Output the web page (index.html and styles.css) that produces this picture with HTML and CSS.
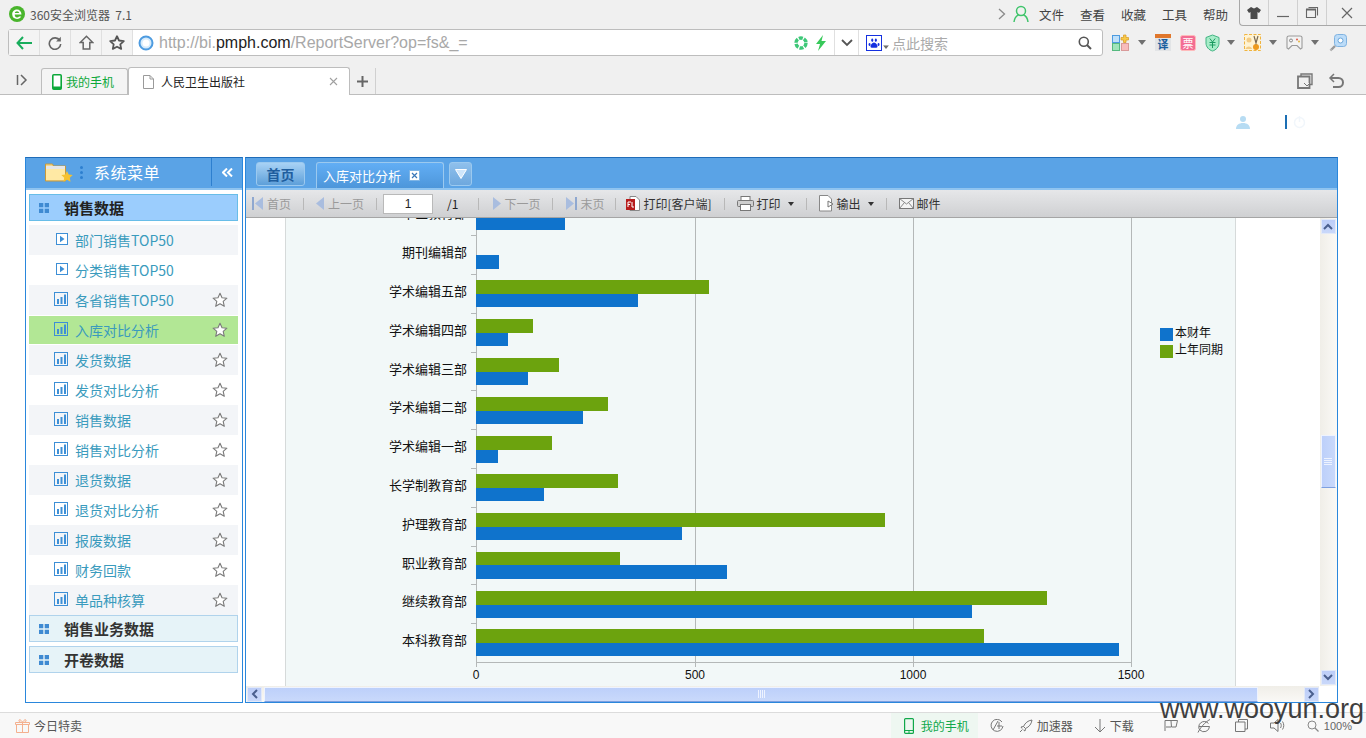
FILE: index.html
```html
<!DOCTYPE html>
<html lang="zh-CN">
<head>
<meta charset="utf-8">
<title>人民卫生出版社</title>
<link rel="stylesheet" href="styles.css">
</head>
<body>
<svg class="defs" width="0" height="0">
  <symbol id="i-star" viewBox="0 0 16 16"><path d="M8 1.2l2 4.5 4.9.5-3.7 3.2 1.1 4.9L8 11.8l-4.3 2.5 1.1-4.9L1.1 6.2 6 5.700z" fill="#fff" stroke="#7a7a7a" stroke-width="1.1" stroke-linejoin="round"/></symbol>
  <symbol id="i-play" viewBox="0 0 12 12"><rect x=".5" y=".5" width="11" height="11" fill="#fff" stroke="#3d8fd6"/><path d="M4 2.800l4.500 3.200L4 9.200z" fill="#3d8fd6"/></symbol>
  <symbol id="i-bars" viewBox="0 0 14 14"><rect x=".5" y=".5" width="13" height="13" fill="none" stroke="#3d8fd6"/><path d="M3 7h2v5H3zM6.500 5h2v7h-2zM10 2.500h2V12h-2z" fill="#3d8fd6"/></symbol>
  <symbol id="i-grid" viewBox="0 0 10 10"><path d="M0 0h4.300v4.300H0zM5.700 0H10v4.300H5.700zM0 5.700h4.300V10H0zM5.700 5.700H10V10H5.700z" fill="#3f8ad2"/></symbol>
  <symbol id="i-caret" viewBox="0 0 8 5"><path d="M0 0h8L4 5z" fill="#707070"/></symbol>
</svg>

<header class="titlebar">
  <svg class="logo" width="18" height="18" viewBox="0 0 18 18"><circle cx="9" cy="9" r="8" fill="#49b52c"/><path d="M4.500 9.500h9c0-3-2-5-4.500-5S4.200 6.500 4.200 9.300 6.200 14 9 14c2 0 3.400-.9 4.200-2.500H11c-.5.700-1.100 1-2 1-1.300 0-2.300-1.100-2.300-3zM6.800 8c.2-1.100 1-1.800 2.200-1.800S11 7 11.200 8z" fill="#fff" fill-rule="evenodd"/></svg>
  <span class="app-name">360安全浏览器&nbsp;&nbsp;7.1</span>
  <div class="title-right">
    <svg class="t-chev" width="8" height="12" viewBox="0 0 8 12"><path d="M1 1l5.500 5L1 11" fill="none" stroke="#8a8a8a" stroke-width="1.300"/></svg>
    <svg class="t-user" width="16" height="18" viewBox="0 0 16 18"><circle cx="8" cy="6" r="4.500" fill="none" stroke="#3fc46b" stroke-width="1.500"/><path d="M1 17c.5-4 3-6.500 4.500-7M15 17c-.5-4-3-6.500-4.500-7" fill="none" stroke="#3fc46b" stroke-width="1.500"/></svg>
    <nav class="t-menu"><span>文件</span><span>查看</span><span>收藏</span><span>工具</span><span>帮助</span></nav>
    <div class="winctl">
      <span class="wc"><svg width="14" height="12" viewBox="0 0 14 12"><path d="M4 0L0 3l2 3 1.500-1v7h7V5L12 6l2-3-4-3-3 1.500z" fill="#4a4a4a"/></svg></span>
      <span class="wc"><svg width="14" height="12" viewBox="0 0 14 12"><path d="M1 9.500h12" stroke="#666" stroke-width="1.200"/></svg></span>
      <span class="wc"><svg width="14" height="13" viewBox="0 0 14 13"><path d="M1.500 3.500h9v8h-9z M3.500 1.500h9v8" fill="none" stroke="#666" stroke-width="1.100"/><path d="M1 3.500h10" stroke="#666" stroke-width="2"/></svg></span>
      <span class="wc wc-last"><svg width="12" height="12" viewBox="0 0 12 12"><path d="M1 1l10 10M11 1L1 11" stroke="#666" stroke-width="1.200"/></svg></span>
    </div>
  </div>
</header>

<div class="navbar">
  <div class="addr">
    <span class="nav-btn"><svg width="16" height="14" viewBox="0 0 16 14"><path d="M7 1L1.500 7 7 13M2 7h14" fill="none" stroke="#18ad5c" stroke-width="2"/></svg></span>
    <span class="nav-btn"><svg width="14" height="14" viewBox="0 0 14 14"><path d="M11.800 4.500A5.700 5.700 0 1 0 12.700 8" fill="none" stroke="#666" stroke-width="1.600"/><path d="M12.800 .8v4.700H8.100z" fill="#666"/></svg></span>
    <span class="nav-btn"><svg width="15" height="15" viewBox="0 0 15 15"><path d="M7.500 1.200L1.200 7.500h3V14h6.600V7.500h3z" fill="none" stroke="#666" stroke-width="1.500"/></svg></span>
    <span class="nav-btn"><svg width="16" height="15" viewBox="0 0 16 15"><path d="M8 1.200l2 4.300 4.800.6-3.500 3.200.9 4.600L8 11.700l-4.200 2.200.9-4.600L1.200 6.100 6 5.500z" fill="none" stroke="#555" stroke-width="1.800" stroke-linejoin="round"/></svg></span>
    <svg class="globe" width="16" height="16" viewBox="0 0 16 16"><circle cx="8" cy="8" r="6.500" fill="#d6ebfb" stroke="#4d9be0" stroke-width="2"/><circle cx="8" cy="8" r="3.500" fill="#fff"/></svg>
    <span class="url">http://bi.<b>pmph.com</b>/ReportServer?op=fs&amp;_=</span>
    <svg class="turbo" width="14" height="14" viewBox="0 0 14 14"><circle cx="7" cy="7" r="5" fill="none" stroke="#3ec878" stroke-width="3.400" stroke-dasharray="4 1.200"/></svg>
    <svg class="bolt" width="12" height="16" viewBox="0 0 12 16"><path d="M8 0L1 9h4l-2 7 8-10H6.500z" fill="#38c95a"/></svg>
    <span class="addr-down"><svg width="12" height="8" viewBox="0 0 12 8"><path d="M1 1l5 5 5-5" fill="none" stroke="#555" stroke-width="1.800"/></svg></span>
    <span class="search">
      <svg class="paw" width="16" height="16" viewBox="0 0 16 16"><rect x=".5" y=".5" width="15" height="15" fill="#fff" stroke="#1430e0"/><path d="M3.500 8a1 1.500 0 1 0 .1 0zM6.200 3.500a1.100 1.700 0 1 0 .1 0zM9.800 3.500a1.100 1.700 0 1 0 .1 0zM12.500 8a1 1.500 0 1 0 .1 0zM8 7.500c-2 0-3.500 2.500-3.500 4 0 1.600 2 1.200 3.500 1.200s3.500.4 3.500-1.200c0-1.500-1.500-4-3.500-4z" fill="#1430e0"/></svg>
      <svg class="paw-caret" width="6" height="4" viewBox="0 0 8 5"><use href="#i-caret"/></svg>
      <span class="search-ph">点此搜索</span>
      <svg class="mag" width="14" height="14" viewBox="0 0 14 14"><circle cx="5.800" cy="5.800" r="4.500" fill="none" stroke="#555" stroke-width="1.600"/><path d="M9 9l4 4" stroke="#555" stroke-width="2"/></svg>
    </span>
  </div>
  <div class="ext">
    <svg width="17" height="17" viewBox="0 0 17 17"><rect x=".5" y="1.500" width="7" height="7" fill="#bfe0fa" stroke="#4d9be0"/><rect x=".5" y="9.500" width="7" height="7" fill="#9fe4ba" stroke="#55b97f"/><rect x="9.500" y="9.500" width="7" height="7" fill="#f8bcbc" stroke="#d99a9a"/><path d="M11.500 1h2.500v2.500h2.500V6H14v2.500h-2.500V6H9V3.500h2.500z" fill="#f7c94a" stroke="#d89a20" stroke-width=".7"/></svg>
    <svg class="ext-caret" width="8" height="5" viewBox="0 0 8 5"><use href="#i-caret"/></svg>
    <svg class="ext-gap" width="16" height="17" viewBox="0 0 16 17"><rect width="16" height="17" fill="#e2e4e6"/><rect width="16" height="4" fill="#e0772c"/><text x="8" y="15" class="ext-txt">译</text></svg>
    <svg class="ext-gap2" width="16" height="16" viewBox="0 0 16 16"><rect x=".5" y=".5" width="15" height="15" rx="2" fill="#f36d93" stroke="#fbb"/><text x="8" y="13" class="ext-txt2">票</text></svg>
    <svg class="ext-gap2" width="15" height="18" viewBox="0 0 15 18"><path d="M7.500 1L14 3.500V9c0 4-3 7-6.500 8C4 16 1 13 1 9V3.500z" fill="#a6ecc8" stroke="#41b482"/><path d="M4.800 4.500l2.700 3.500 2.700-3.500M4.500 8.500h6M4.500 11h6M7.500 8v6" fill="none" stroke="#1a9a60"/></svg>
    <svg class="ext-caret2" width="8" height="5" viewBox="0 0 8 5"><use href="#i-caret"/></svg>
    <svg class="ext-gap3" width="17" height="17" viewBox="0 0 17 17"><rect x=".5" y=".5" width="16" height="16" fill="#fff3d2" stroke="#f0b440" stroke-dasharray="3 1.500"/><circle cx="5" cy="6" r="2.500" fill="#f3cc86"/><path d="M1.500 15c.5-3.500 6-3.500 6.500 0z" fill="#f3cc86"/><circle cx="12" cy="13" r="3" fill="#ee9a1e"/><path d="M10 2l2 7 2-7" fill="none" stroke="#7a6a55" stroke-width="1.200"/></svg>
    <svg class="ext-caret3" width="8" height="5" viewBox="0 0 8 5"><use href="#i-caret"/></svg>
    <svg class="ext-gap3" width="17" height="15" viewBox="0 0 17 15"><path d="M1 2.500C1 1.500 2 1 3 1h11c1 0 2 .5 2 1.500V13l-1.500 1L11 10.500H6L2.500 14 1 13z" fill="#f3f3f3" stroke="#9b9b9b" stroke-width="1.100"/><circle cx="5" cy="5.500" r="1.500" fill="none" stroke="#888"/><circle cx="11" cy="4.500" r="1" fill="#e15b4a"/><circle cx="13" cy="6.500" r="1" fill="#e6b740"/></svg>
    <svg class="ext-caret3" width="8" height="5" viewBox="0 0 8 5"><use href="#i-caret"/></svg>
    <svg class="ext-gap4" width="18" height="18" viewBox="0 0 18 18"><rect x="5.500" y=".5" width="12" height="12" rx="3" fill="#bcdcf8" stroke="#7fb2e0"/><circle cx="11.500" cy="6.500" r="2.500" fill="#fff" stroke="#6ba6da"/><path d="M6 12l-4.500 4.500" stroke="#999" stroke-width="2.400"/><path d="M2 15.500l1 1" stroke="#fff"/></svg>
  </div>
</div>

<div class="tabbar">
  <svg class="side-toggle" width="12" height="12" viewBox="0 0 12 12"><path d="M1.500 1v10" stroke="#666" stroke-width="1.500"/><path d="M5 1l5 5-5 5" fill="none" stroke="#666" stroke-width="1.500"/></svg>
  <div class="btab">
    <svg width="10" height="16" viewBox="0 0 10 16"><rect x=".8" y=".8" width="8.400" height="14.400" rx="1" fill="#fff" stroke="#0da83a" stroke-width="1.600"/><path d="M1 12.500h8V15H1z" fill="#0da83a"/></svg>
    <span>我的手机</span>
  </div>
  <div class="btab btab-on">
    <svg class="doc" width="11" height="14" viewBox="0 0 11 14"><path d="M.5.500h6.500l3.500 3.500v9.500H.5z M7 .5V4h3.500" fill="#fff" stroke="#9a9a9a"/></svg>
    <span>人民卫生出版社</span>
    <svg class="btab-x" width="9" height="9" viewBox="0 0 9 9"><path d="M1 1l7 7M8 1L1 8" stroke="#a0a0a0" stroke-width="1.100"/></svg>
  </div>
  <span class="newtab"><svg width="11" height="11" viewBox="0 0 11 11"><path d="M5.500 0v11M0 5.500h11" stroke="#666" stroke-width="2"/></svg></span>
  <div class="tab-tools">
    <svg width="17" height="16" viewBox="0 0 17 16"><path d="M4 3.500V1h11v10.500h-2" fill="none" stroke="#777" stroke-width="1.400"/><path d="M1 3.500h11.500V15H1z" fill="none" stroke="#777" stroke-width="1.800"/><path d="M7 10l3 3 3-3" fill="#f0f0f0" stroke="#777"/></svg>
    <svg width="16" height="16" viewBox="0 0 16 16"><path d="M3 5h7.500a4.500 4.500 0 0 1 0 9H5" fill="none" stroke="#777" stroke-width="2"/><path d="M6 1L2 5l4 4" fill="none" stroke="#777" stroke-width="1.500"/></svg>
  </div>
</div>

<main class="page">
  <div class="userbar">
    <svg class="ub-user" width="14" height="14" viewBox="0 0 14 14"><circle cx="7" cy="4" r="3" fill="#b7dcf3"/><path d="M0 14c0-4 3-6 7-6s7 2 7 6z" fill="#b7dcf3"/></svg>
    <span class="ub-sep"></span>
    <svg width="13" height="14" viewBox="0 0 13 14"><circle cx="6.500" cy="7.500" r="5" fill="none" stroke="#f1f6fb" stroke-width="1.500"/><path d="M6.500 1v6" stroke="#f1f6fb" stroke-width="1.500"/></svg>
  </div>

  <div class="panels">
    <aside class="leftp">
      <div class="lp-head">
        <svg class="folder" width="28" height="19" viewBox="0 0 28 19"><path d="M.5 1h7l1 2h12v15H.5z" fill="#f5d78a" stroke="#c79a3c"/><path d="M1 3h19v3H1z" fill="#e6e6e6"/><path d="M1 6h19v11H1z" fill="#ffe9a4"/><path d="M22 8l1.700 3.600 4 .5-2.900 2.700.7 3.900-3.500-1.900-3.500 1.900.7-3.900-2.900-2.700 4-.5z" fill="#f6c22f"/></svg>
        <span class="dots"><i></i><i></i><i></i></span>
        <span class="lp-title">系统菜单</span>
        <span class="lp-collapse"><svg width="11" height="9" viewBox="0 0 11 9"><path d="M5 .5L1 4.500l4 4M10 .5l-4 4 4 4" fill="none" stroke="#fff" stroke-width="2"/></svg></span>
      </div>
      <div class="lp-body">
        <div class="grp grp-on"><svg width="10" height="10"><use href="#i-grid"/></svg><span>销售数据</span></div>
        <ul class="items">
          <li class="item alt"><svg class="ic-play" width="12" height="12"><use href="#i-play"/></svg><span>部门销售TOP50</span></li>
          <li class="item"><svg class="ic-play" width="12" height="12"><use href="#i-play"/></svg><span>分类销售TOP50</span></li>
          <li class="item alt"><svg class="ic-bars" width="14" height="14"><use href="#i-bars"/></svg><span>各省销售TOP50</span><svg class="star" width="16" height="16"><use href="#i-star"/></svg></li>
          <li class="item on"><svg class="ic-bars" width="14" height="14"><use href="#i-bars"/></svg><span>入库对比分析</span><svg class="star" width="16" height="16"><use href="#i-star"/></svg></li>
          <li class="item alt"><svg class="ic-bars" width="14" height="14"><use href="#i-bars"/></svg><span>发货数据</span><svg class="star" width="16" height="16"><use href="#i-star"/></svg></li>
          <li class="item"><svg class="ic-bars" width="14" height="14"><use href="#i-bars"/></svg><span>发货对比分析</span><svg class="star" width="16" height="16"><use href="#i-star"/></svg></li>
          <li class="item alt"><svg class="ic-bars" width="14" height="14"><use href="#i-bars"/></svg><span>销售数据</span><svg class="star" width="16" height="16"><use href="#i-star"/></svg></li>
          <li class="item"><svg class="ic-bars" width="14" height="14"><use href="#i-bars"/></svg><span>销售对比分析</span><svg class="star" width="16" height="16"><use href="#i-star"/></svg></li>
          <li class="item alt"><svg class="ic-bars" width="14" height="14"><use href="#i-bars"/></svg><span>退货数据</span><svg class="star" width="16" height="16"><use href="#i-star"/></svg></li>
          <li class="item"><svg class="ic-bars" width="14" height="14"><use href="#i-bars"/></svg><span>退货对比分析</span><svg class="star" width="16" height="16"><use href="#i-star"/></svg></li>
          <li class="item alt"><svg class="ic-bars" width="14" height="14"><use href="#i-bars"/></svg><span>报废数据</span><svg class="star" width="16" height="16"><use href="#i-star"/></svg></li>
          <li class="item"><svg class="ic-bars" width="14" height="14"><use href="#i-bars"/></svg><span>财务回款</span><svg class="star" width="16" height="16"><use href="#i-star"/></svg></li>
          <li class="item alt"><svg class="ic-bars" width="14" height="14"><use href="#i-bars"/></svg><span>单品种核算</span><svg class="star" width="16" height="16"><use href="#i-star"/></svg></li>
        </ul>
        <div class="grp"><svg width="10" height="10"><use href="#i-grid"/></svg><span>销售业务数据</span></div>
        <div class="grp"><svg width="10" height="10"><use href="#i-grid"/></svg><span>开卷数据</span></div>
      </div>
    </aside>

    <section class="rightp">
      <div class="rp-head">
        <span class="rtab">首页</span>
        <span class="rtab rtab-on">入库对比分析<svg width="11" height="11" viewBox="0 0 11 11"><rect x=".5" y=".5" width="10" height="10" fill="#fff" stroke="#7fb5e6"/><path d="M3 3l5 5M8 3L3 8" stroke="#3b78b8" stroke-width="1.200"/></svg></span>
        <span class="rtab-more"><svg width="12" height="10" viewBox="0 0 12 10"><path d="M.5.500h11L6 9.500z" fill="#cfe6fb" stroke="#fff"/></svg></span>
      </div>
      <div class="rp-tools">
        <span class="tb off"><svg width="12" height="13" viewBox="0 0 12 13"><path d="M0 0h2v13H0z" fill="#8fa8d0"/><path d="M11 0v13L3 6.500z" fill="#a9bddf"/></svg>首页</span>
        <i class="sep"></i>
        <span class="tb off"><svg width="9" height="13" viewBox="0 0 9 13"><path d="M8 0v13L0 6.500z" fill="#a9bddf"/></svg>上一页</span>
        <i class="sep"></i>
        <input class="pageno" type="text" value="1" aria-label="页码">
        <span class="total">/1</span>
        <i class="sep sep-w"></i>
        <span class="tb off"><svg width="9" height="13" viewBox="0 0 9 13"><path d="M1 0v13l8-6.500z" fill="#a9bddf"/></svg>下一页</span>
        <i class="sep"></i>
        <span class="tb off"><svg width="12" height="13" viewBox="0 0 12 13"><path d="M1 0v13l8-6.500z" fill="#a9bddf"/><path d="M10 0h2v13h-2z" fill="#8fa8d0"/></svg>末页</span>
        <i class="sep sep-n"></i>
        <span class="tb"><svg width="14" height="15" viewBox="0 0 14 15"><path d="M4 .5h6l3.500 3.500v10.500H4z" fill="#fff" stroke="#888"/><rect y="3" width="9" height="11" fill="#b71c1c"/><path d="M2 11V6h3M2 8.500h2M6 6v5h2" fill="none" stroke="#fff"/></svg>打印[客户端]</span>
        <i class="sep"></i>
        <span class="tb"><svg width="17" height="15" viewBox="0 0 17 15"><rect x="4" y=".5" width="9" height="4" fill="#fff" stroke="#777"/><rect x=".5" y="4.500" width="16" height="6" rx="1" fill="#cfcfcf" stroke="#777"/><rect x="3.500" y="8.500" width="10" height="6" fill="#fff" stroke="#777"/></svg>打印<svg class="tb-caret" width="6" height="4" viewBox="0 0 6 4"><path d="M0 0h6L3 4z" fill="#333"/></svg></span>
        <i class="sep"></i>
        <span class="tb"><svg width="15" height="17" viewBox="0 0 15 17"><path d="M.5.500H9l3.500 3.500v12H.5z" fill="#fff" stroke="#888"/><path d="M9 6l5 3-5 3z" fill="#fff" stroke="#777"/></svg>输出<svg class="tb-caret" width="6" height="4" viewBox="0 0 6 4"><path d="M0 0h6L3 4z" fill="#333"/></svg></span>
        <i class="sep"></i>
        <span class="tb"><svg width="15" height="11" viewBox="0 0 15 11"><rect x=".5" y=".5" width="14" height="10" fill="#f4f4f4" stroke="#777"/><path d="M.5.500l7 5.500 7-5.500M.5 10.500l5-6M14.500 10.500l-5-6" fill="none" stroke="#888"/></svg>邮件</span>
      </div>
      <div class="rp-content">
        <svg class="chart" width="1074" height="468" viewBox="246 218 1074 468">
          <rect x="285" y="218" width="951" height="468" class="plot"/>
          <path d="M285.500 218v468M1235.500 218v468" class="frame"/>
          <path d="M695.500 218v449M913.500 218v449M1131.500 218v449" class="gridl"/>
          <path d="M476.500 218v449M471 235.500h5M471 274.500h5M471 313.500h5M471 352.500h5M471 390.500h5M471 429.500h5M471 468.500h5M471 507.500h5M471 546.500h5M471 584.500h5M471 623.500h5M476 662.500h656" class="gridl"/>
          <g class="s-green">
            <rect x="476" y="280" width="233" height="14"/><rect x="476" y="319" width="57" height="14"/>
            <rect x="476" y="358" width="83" height="14"/><rect x="476" y="397" width="132" height="14"/>
            <rect x="476" y="436" width="76" height="14"/><rect x="476" y="474" width="142" height="14"/>
            <rect x="476" y="513" width="409" height="14"/><rect x="476" y="552" width="144" height="14"/>
            <rect x="476" y="591" width="571" height="14"/><rect x="476" y="629" width="508" height="14"/>
          </g>
          <g class="s-blue">
            <rect x="476" y="218" width="89" height="12"/><rect x="476" y="255" width="23" height="14"/>
            <rect x="476" y="294" width="162" height="13"/><rect x="476" y="333" width="32" height="13"/>
            <rect x="476" y="372" width="52" height="13"/><rect x="476" y="411" width="107" height="13"/>
            <rect x="476" y="450" width="22" height="13"/><rect x="476" y="488" width="68" height="13"/>
            <rect x="476" y="527" width="206" height="13"/><rect x="476" y="565" width="251" height="14"/>
            <rect x="476" y="605" width="496" height="13"/><rect x="476" y="643" width="643" height="13"/>
          </g>
          <g class="cat">
            <text x="467" y="218">中医教育部</text><text x="467" y="257">期刊编辑部</text>
            <text x="467" y="296">学术编辑五部</text><text x="467" y="335">学术编辑四部</text>
            <text x="467" y="374">学术编辑三部</text><text x="467" y="412">学术编辑二部</text>
            <text x="467" y="451">学术编辑一部</text><text x="467" y="490">长学制教育部</text>
            <text x="467" y="529">护理教育部</text><text x="467" y="568">职业教育部</text>
            <text x="467" y="606">继续教育部</text><text x="467" y="645">本科教育部</text>
          </g>
          <g class="val">
            <text x="476" y="679">0</text><text x="695" y="679">500</text>
            <text x="913" y="679">1000</text><text x="1131" y="679">1500</text>
          </g>
          <rect x="1160" y="328" width="13" height="13" class="s-blue"/>
          <rect x="1160" y="345" width="13" height="13" class="s-green"/>
          <text x="1175" y="337" class="leg">本财年</text>
          <text x="1175" y="354" class="leg">上年同期</text>
        </svg>
        <div class="vscroll">
          <span class="sb-btn"><svg width="10" height="7" viewBox="0 0 10 7"><path d="M1 6l4-4 4 4" fill="none" stroke="#4a5f8e" stroke-width="2"/></svg></span>
          <span class="sb-thumb-v"><svg width="8" height="7" viewBox="0 0 8 7"><path d="M0 .5h8M0 2.500h8M0 4.500h8M0 6.500h8" stroke="#eef3ff"/></svg></span>
          <span class="sb-btn sb-end"><svg width="10" height="7" viewBox="0 0 10 7"><path d="M1 1l4 4 4-4" fill="none" stroke="#4a5f8e" stroke-width="2"/></svg></span>
        </div>
      </div>
      <div class="hscroll">
        <span class="sb-btn"><svg width="7" height="10" viewBox="0 0 7 10"><path d="M6 1L2 5l4 4" fill="none" stroke="#4a5f8e" stroke-width="2"/></svg></span>
        <span class="sb-thumb-h"><svg width="7" height="8" viewBox="0 0 7 8"><path d="M.5 0v8M2.500 0v8M4.500 0v8M6.500 0v8" stroke="#eef3ff"/></svg></span>
        <span class="sb-btn sb-end"><svg width="7" height="10" viewBox="0 0 7 10"><path d="M1 1l4 4-4 4" fill="none" stroke="#4a5f8e" stroke-width="2"/></svg></span>
      </div>
    </section>
  </div>
</main>

<footer class="statusbar">
  <svg class="gift" width="15" height="14" viewBox="0 0 15 14"><path d="M1.500 5.500h12v8h-12zM.5 3.500h14v2H.5zM7.500 3.500v10M7.500 3.500C5 3.500 3.500 2.500 4 1c.7-1 2.800.5 3.500 2.500C8.200 1.500 10.300 0 11 1c.5 1.500-1 2.500-3.500 2.500" fill="none" stroke="#f4b08f"/></svg>
  <span class="deal">今日特卖</span>
  <div class="st-right">
    <span class="st-phone"><svg width="10" height="16" viewBox="0 0 10 16"><rect x=".6" y=".6" width="8.800" height="14.800" rx="1" fill="none" stroke="#10a84a" stroke-width="1.200"/><path d="M1 12.500h8M4 14h2" stroke="#10a84a"/></svg><span>我的手机</span></span>
    <svg class="st-i1" width="14" height="14" viewBox="0 0 14 14"><path d="M12 3A6 6 0 1 0 13 7" fill="none" stroke="#777"/><path d="M3 11l5-9M7 7h5M9 3v7" fill="none" stroke="#777"/></svg>
    <span class="st-txt st-acc"><svg width="14" height="14" viewBox="0 0 14 14"><path d="M13 1C9 1.500 6 4 4.500 7.500l2 2C10 8 12.500 5 13 1zM4.500 7.500L2 8l1 1.500M6.500 9.500L6 12l-1.500-1M3.500 10.500L1 13" fill="none" stroke="#777"/></svg>加速器</span>
    <span class="st-txt st-dl"><svg width="12" height="14" viewBox="0 0 12 14"><path d="M6 0v13M1 8l5 5 5-5" fill="none" stroke="#777"/></svg>下载</span>
    <svg class="st-i2" width="14" height="11" viewBox="0 0 14 11"><path d="M1 11V.5h12.500L12 7H7.500L7 1M7 7H2" fill="none" stroke="#777"/></svg>
    <svg class="st-i3" width="14" height="14" viewBox="0 0 14 14"><path d="M3 11.500A5.500 5.500 0 0 1 11.500 4.500M2 7.500h10.500A5.500 5.500 0 0 1 3 11M1 13.500C3 9 8 3 13 .5" fill="none" stroke="#777"/></svg>
    <svg class="st-i4" width="13" height="13" viewBox="0 0 13 13"><path d="M3.500 3V.5h9V10H10M.5 3h9.500v9.500H.5z" fill="none" stroke="#777"/></svg>
    <svg class="st-i5" width="15" height="13" viewBox="0 0 15 13"><path d="M.5 4v5H4l4 3.500V.5L4 4zM10.500 4c1 1.500 1 3.500 0 5M12.500 2.500c1.700 2.500 1.700 5.500 0 8" fill="none" stroke="#777"/></svg>
    <svg class="st-i6" width="12" height="12" viewBox="0 0 12 12"><circle cx="5" cy="5" r="4" fill="none" stroke="#888"/><path d="M8 8l3.500 3.500" stroke="#888" stroke-width="1.300"/></svg>
    <span class="st-zoom">100%</span>
  </div>
  <span class="watermark">www.wooyun.org</span>
</footer>
</body>
</html>
```

FILE: styles.css
```css
* { box-sizing: border-box; }
html, body { margin: 0; padding: 0; }
body {
  width: 1366px;
  height: 738px;
  overflow: hidden;
  display: flex;
  flex-direction: column;
  font-family: "Noto Sans CJK SC", "Liberation Sans", sans-serif;
  font-size: 12px;
  color: #333;
  background: #f0f0f0;
}
svg { display: block; flex: none; }
.defs { position: absolute; }

/* title bar */
.titlebar { height: 28px; display: flex; align-items: center; padding-left: 8px; }
.logo { margin-right: 4px; }
.app-name { font-size: 12px; color: #555; }
.title-right { margin-left: auto; display: flex; align-items: center; height: 28px; }
.t-chev { margin-right: 7px; }
.t-user { margin-right: 10px; }
.t-menu { display: flex; gap: 16px; margin-right: 11px; font-size: 12.500px; color: #444; }
.winctl {
  width: 127px; height: 26px; margin-bottom: 2px;
  display: flex;
  border: 1px solid #a8a8a8; border-top: 0; border-right: 0;
  border-bottom-left-radius: 4px;
}
.wc { width: 29px; display: flex; align-items: center; justify-content: center; border-right: 1px solid #d0d0d0; }
.wc-last { flex: 1; border-right: 0; }

/* navigation bar */
.navbar { height: 38px; display: flex; padding: 1px 0 0 8px; }
.addr {
  width: 1095px; height: 27px;
  display: flex; align-items: center;
  background: #fff; border: 1px solid #bdbdbd; border-radius: 3px;
}
.nav-btn {
  width: 31px; height: 25px;
  display: flex; align-items: center; justify-content: center;
  background: #f4f4f4; border-right: 1px solid #e0e0e0;
}
.globe { margin: 0 5px 0 5px; }
.url { font-family: "Liberation Sans", sans-serif; font-size: 16px; color: #a8a8a8; }
.url b { font-weight: 400; color: #222; }
.turbo { margin-left: auto; margin-right: 7px; }
.bolt { margin-right: 7px; }
.addr-down {
  width: 25px; height: 25px;
  display: flex; align-items: center; justify-content: center;
  border-left: 1px solid #e0e0e0; border-right: 1px solid #e0e0e0;
}
.search { width: 243px; display: flex; align-items: center; padding-left: 7px; }
.paw-caret { margin: 8px 3px 0 1px; }
.search-ph { font-size: 14px; color: #aaa; }
.mag { margin-left: auto; margin-right: 10px; }
.ext { flex: 1; display: flex; align-items: center; height: 27px; padding-left: 9px; }
.ext-caret { margin-left: 9px; }
.ext-gap { margin-left: 9px; }
.ext-gap2 { margin-left: 9px; }
.ext-caret2 { margin-left: 7px; }
.ext-gap3 { margin-left: 9px; }
.ext-caret3 { margin-left: 8px; }
.ext-gap4 { margin-left: 10px; }
.ext-txt { font-size: 11px; fill: #1a5f9e; text-anchor: middle; font-weight: 700; }
.ext-txt2 { font-size: 11px; fill: #fff; text-anchor: middle; }

/* tab bar */
.tabbar {
  height: 29px; display: flex; align-items: flex-end; padding-left: 16px;
  border-bottom: 1px solid #bdbdbd;
}
.side-toggle { margin: 0 13px 8px 0; }
.btab {
  width: 87px; height: 26px;
  display: flex; align-items: center; gap: 4px; padding-left: 10px;
  font-size: 12px; color: #0da83a;
  background: #f4f4f4;
  border: 1px solid #bdbdbd; border-bottom: 0; border-radius: 3px 3px 0 0;
}
.btab-on {
  width: 222px; height: 28px; margin-bottom: -1px; padding-left: 14px; gap: 7px;
  color: #222; background: #fff;
}
.btab-x { margin-left: auto; margin-right: 11px; }
.newtab {
  width: 26px; height: 26px;
  display: flex; align-items: center; justify-content: center;
  border-right: 1px solid #d0d0d0;
}
.tab-tools { margin-left: auto; display: flex; gap: 14px; padding: 0 22px 5px 0; }

/* page */
.page { height: 617px; background: #fff; padding-left: 25px; }
.userbar { height: 62px; display: flex; align-items: flex-start; justify-content: flex-end; padding: 20px 60px 0 0; }
.ub-user { margin-right: 35px; }
.ub-sep { width: 2px; height: 14px; margin-right: 6px; background: #1c6fb4; }
.panels { height: 546px; display: flex; gap: 2px; }

/* left panel */
.leftp { width: 218px; border: 1px solid #2a87dc; border-top-color: #1f6cb8; }
.lp-head {
  height: 32px; display: flex; align-items: center; padding: 0 0 2px 19px;
  background: #5aa3e6;
  border-bottom: 2px solid #8fc4f0;
}
.folder { margin-right: 7px; }
.dots { display: flex; flex-direction: column; gap: 2px; margin-right: 11px; }
.dots i { width: 3px; height: 3px; border-radius: 50%; background: #2d7fcf; }
.lp-title { font-size: 16px; color: #fff; letter-spacing: .5px; }
.lp-collapse {
  margin-left: auto; width: 31px; height: 28px;
  display: flex; align-items: center; justify-content: center;
  border-left: 1px solid #2d7fcf;
}
.lp-body { padding: 4px 4px 0 3px; }
.grp {
  height: 27px; display: flex; align-items: center; gap: 15px; padding-left: 9px;
  font-size: 15px; font-weight: 700; color: #333;
  background: #e6f3f8; border: 1px solid #b0d3ec;
}
.grp + .grp { margin-top: 4px; }
.grp-on { background: #9bcdfd; border-color: #68bde8; color: #222; margin-bottom: 4px; }
.items { list-style: none; margin: 0; padding: 0; }
.item {
  height: 30px; display: flex; align-items: center; position: relative;
  font-size: 14px; color: #3a9bbd;
}
.item.alt { background: #f3f5f8; }
.item.on { height: 28px; margin: 1px 0; background: #b2e795; }
.ic-play { margin: 0 7px 2px 27px; }
.ic-bars { margin: 0 7px 2px 25px; }
.star { margin-left: auto; margin-right: 10px; }

/* right panel */
.rightp { width: 1093px; display: flex; flex-direction: column; border: 1px solid #2a87dc; border-top-color: #1f6cb8; }
.rp-head {
  height: 32px; display: flex; align-items: flex-start; padding: 4px 0 0 10px;
  background: #5aa3e6;
  border-bottom: 2px solid #8fc4f0;
}
.rtab {
  width: 49px; height: 24px;
  display: flex; align-items: center; justify-content: center;
  font-size: 14px; font-weight: 700; color: #1f5e9e;
  background: linear-gradient(#a8d2f5, #5d9fd9);
  border: 1px solid #9bc9ef; border-radius: 3px;
}
.rtab-on {
  width: 128px; height: 26px; margin-left: 11px; padding-left: 6px; gap: 8px; justify-content: flex-start;
  font-size: 13px; font-weight: 400; color: #fff;
  background: linear-gradient(#62aef5, #4d96da);
  border-bottom: 0; border-radius: 3px 3px 0 0;
}
.rtab-more {
  width: 23px; height: 24px; margin-left: 5px;
  display: flex; align-items: center; justify-content: center;
  background: linear-gradient(#8fc0ec, #6ea8de);
  border: 1px solid #9bc9ef; border-radius: 3px;
}
.rp-tools {
  height: 28px; display: flex; align-items: center; padding-left: 6px;
  font-size: 12px; color: #333;
  background: linear-gradient(#e6e7e9, #cfd0d2);
  border-bottom: 1px solid #a5a5a5;
}
.tb { display: flex; align-items: center; gap: 3px; }
.tb.off { color: #9a9a9a; }
.tb-caret { margin-left: 4px; }
.sep { width: 1px; height: 12px; margin: 0 12px; background: #b8b8b8; }
.sep-w { margin-left: 20px; margin-right: 13px; }
.sep-n { margin-left: 11px; margin-right: 10px; }
.pageno {
  width: 50px; height: 20px; margin-left: -6px; padding: 0;
  text-align: center; font-family: "Liberation Sans", sans-serif; font-size: 12px;
  border: 1px solid #b9b9b9; background: #fff; color: #222;
}
.total { margin-left: 14px; color: #222; }

.rp-content { height: 468px; display: flex; }
.chart { background: #fff; }
.plot { fill: #f2f8f8; }
.frame { stroke: #d6dada; fill: none; stroke-width: 1; }
.gridl { stroke: #b4b8b8; fill: none; }
.s-green { fill: #6ca30e; }
.s-blue { fill: #0f73cc; }
.cat text { font-size: 13px; fill: #111; text-anchor: end; }
.val text { font-family: "Liberation Sans", sans-serif; font-size: 12px; fill: #111; text-anchor: middle; }
.leg { font-size: 12px; fill: #111; }

.vscroll {
  width: 17px; display: flex; flex-direction: column; align-items: center; padding: 1px 1px 1px 0;
  background: linear-gradient(90deg, #f0eee8, #faf9f6);
}
.sb-btn {
  width: 15px; height: 15px; flex: none;
  display: flex; align-items: center; justify-content: center;
  background: linear-gradient(#bccdf8, #c9d8fa);
  border: 1px solid #e2e9f8;
}
.sb-thumb-v {
  width: 15px; height: 53px; margin-top: 201px;
  display: flex; align-items: center; justify-content: center;
  background: linear-gradient(90deg, #bdd0fa, #c9d9fb);
  border: 1px solid #eef3ff; border-bottom-color: #7d9fe0;
}
.sb-end { margin-top: auto; }
.hscroll {
  height: 16px; width: 1073px; display: flex; align-items: center; padding-left: 1px;
  background: linear-gradient(#f0eee8, #faf9f6);
}
.sb-thumb-h {
  width: 995px; height: 15px; margin-left: 2px;
  display: flex; align-items: center; justify-content: center;
  background: linear-gradient(#bdd0fa, #c9d9fb);
  border: 1px solid #eef3ff; border-bottom-color: #7d9fe0;
}
.hscroll .sb-end { margin: 0 0 0 46px; }

/* status bar */
.statusbar {
  height: 26px; position: relative;
  display: flex; align-items: center; padding-left: 15px;
  background: #f8f8f8; border-top: 1px solid #dcdcdc;
  font-size: 12px; color: #555;
}
.deal { margin-left: 4px; }
.st-right { margin-left: auto; display: flex; align-items: center; height: 25px; }
.st-phone {
  width: 87px; height: 25px; display: flex; align-items: center; gap: 7px; padding-left: 13px;
  background: #eef7f1; color: #10a84a;
}
.st-i1 { margin: 0 0 0 12px; }
.st-txt { display: flex; align-items: center; gap: 4px; }
.st-acc { margin-left: 15px; }
.st-dl { margin-left: 21px; }
.st-i2 { margin-left: 30px; }
.st-i3 { margin-left: 19px; }
.st-i4 { margin-left: 24px; }
.st-i5 { margin-left: 22px; }
.st-i6 { margin-left: 22px; }
.st-zoom { margin: 0 14px 0 5px; font-family: "Liberation Sans", sans-serif; font-size: 11px; color: #666; }
.watermark {
  position: absolute; left: 1160px; top: -20px;
  font-family: "Liberation Sans", sans-serif; font-size: 27px; line-height: 32px; color: #3f3f3f;
  white-space: nowrap;
}
```
